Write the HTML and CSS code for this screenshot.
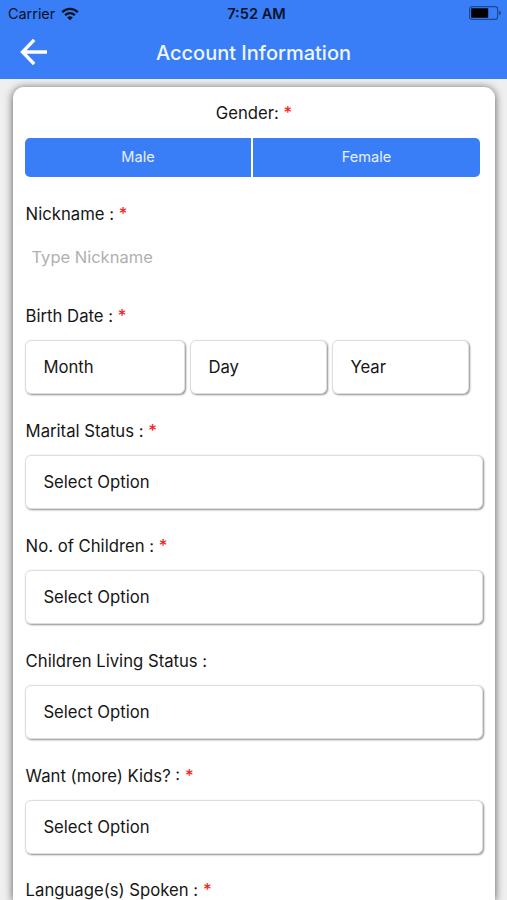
FILE: index.html
```html
<!DOCTYPE html>
<html lang="en">
<head>
<meta charset="utf-8">
<title>Account Information</title>
<link rel="stylesheet" href="styles.css">
</head>
<body>
<header class="header">
  <div class="status">
    <div class="carrier"><span>Carrier</span>
      <svg class="wifi" width="18" height="14" viewBox="0 0 18 14" fill="none" stroke="#06122a" stroke-width="2.3"><path d="M1.2 5.2C5.6.8 12.4.8 16.8 5.2"/><path d="M4.1 8.2C7 5.5 11 5.5 13.9 8.2"/><path d="M9 13.2 6.2 10.4Q9 8.1 11.8 10.4Z" fill="#06122a" stroke="none"/></svg>
    </div>
    <span class="clock">7:52 AM</span>
    <svg class="battery" width="33" height="14" viewBox="0 0 33 14"><rect x="1.6" y=".6" width="28" height="12.8" rx="2.5" fill="none" stroke="#1d478f" stroke-width="1.2"/><rect x="3.2" y="2.2" width="17" height="9.6" rx=".5" fill="#000"/><path d="M31 4.8q2 .4 2 2.2t-2 2.2z" fill="#1d478f"/></svg>
  </div>
  <div class="titlebar">
    <svg class="back" width="28" height="28" viewBox="0 0 28 28" fill="none" stroke="#fff" stroke-width="3.3"><path d="M14.2 1.8 2.5 14l11.7 12M2.5 14H27"/></svg>
    <h1 class="title">Account Information</h1>
  </div>
</header>
<main class="card">
  <div class="label center">Gender: <span class="req">*</span></div>
  <div class="gender"><button>Male</button><button>Female</button></div>
  <section class="field nickname">
    <div class="label">Nickname : <span class="req">*</span></div>
    <input class="input" type="text" placeholder="Type Nickname">
  </section>
  <section class="field birth">
    <div class="label">Birth Date : <span class="req">*</span></div>
    <div class="dates"><div class="select">Month</div><div class="select">Day</div><div class="select">Year</div></div>
  </section>
  <section class="field">
    <div class="label">Marital Status : <span class="req">*</span></div>
    <div class="select">Select Option</div>
  </section>
  <section class="field">
    <div class="label">No. of Children : <span class="req">*</span></div>
    <div class="select">Select Option</div>
  </section>
  <section class="field">
    <div class="label">Children Living Status :</div>
    <div class="select">Select Option</div>
  </section>
  <section class="field">
    <div class="label">Want (more) Kids? : <span class="req">*</span></div>
    <div class="select">Select Option</div>
  </section>
  <div class="label">Language(s) Spoken : <span class="req">*</span></div>
</main>
</body>
</html>
```
FILE: styles.css
```css
* { box-sizing: border-box; }
body {
  margin: 0;
  height: 900px;
  overflow: hidden;
  background: #efefef;
  color: #161616;
  font: 16.7px/24px Inter, "Liberation Sans", sans-serif;
}
.header { height: 79px; background: #397ef6; }
.status {
  display: grid;
  grid-template-columns: 1fr auto 1fr;
  align-items: center;
  height: 27px;
  padding: 0 6px 0 8px;
  color: #06122a;
  font-size: 14.4px;
}
.carrier { display: flex; align-items: center; gap: 6px; }
.clock { padding-left: 4px; font-size: 14.6px; font-weight: 600; }
.battery { justify-self: end; margin-top: -1px; }
.titlebar {
  display: grid;
  grid-template-columns: 48px 1fr 48px;
  align-items: center;
  height: 50px;
}
.back { margin-left: 20px; }
.title {
  margin: 1px 0 0;
  color: #eef5ff;
  font-size: 20px;
  font-weight: 500;
  text-align: center;
  white-space: nowrap;
}
.card {
  width: 482px;
  height: 813px;
  margin: 8px 0 0 13px;
  padding: 14px 11px 0 12px;
  overflow: hidden;
  border-radius: 11px 11px 0 0;
  background: #fff;
  box-shadow: 0 1px 8px rgba(0, 0, 0, .65);
}
.label { height: 24px; padding-left: .6px; white-space: nowrap; }
.center { padding: 0 1px 0 0; text-align: center; }
.req { color: #f51d1d; font-weight: 500; }
.gender {
  display: grid;
  grid-template-columns: 226px 227px;
  gap: 2px;
  margin-top: 13px;
}
.gender button {
  height: 39px;
  padding: 0 0 2px;
  border: 0;
  background: #397ef6;
  color: #e8f1ff;
  font: 14.6px Inter, "Liberation Sans", sans-serif;
}
.gender button:first-child { border-radius: 5px 0 0 5px; }
.gender button:last-child { border-radius: 0 5px 5px 0; }
.field { height: 114.8px; }
.nickname { height: 102.5px; margin-top: 24.5px; }
.birth { height: 115.3px; }
.input {
  display: block;
  width: 100%;
  height: 38px;
  margin-top: 12px;
  padding: 0 6.5px;
  border: 0;
  background: none;
  font: inherit;
  font-size: 16.5px;
}
.input::placeholder { color: #b0b0b0; }
.select {
  height: 54px;
  margin-top: 12px;
  padding: 0 17.4px;
  border: 1px solid #dedede;
  border-radius: 6px;
  background: #fff;
  box-shadow: 1px 1px 2px rgba(0, 0, 0, .45);
  line-height: 52px;
}
.field > .select { width: 458px; }
.dates {
  display: grid;
  grid-template-columns: 160px 137px 137px;
  gap: 5px;
}
```
